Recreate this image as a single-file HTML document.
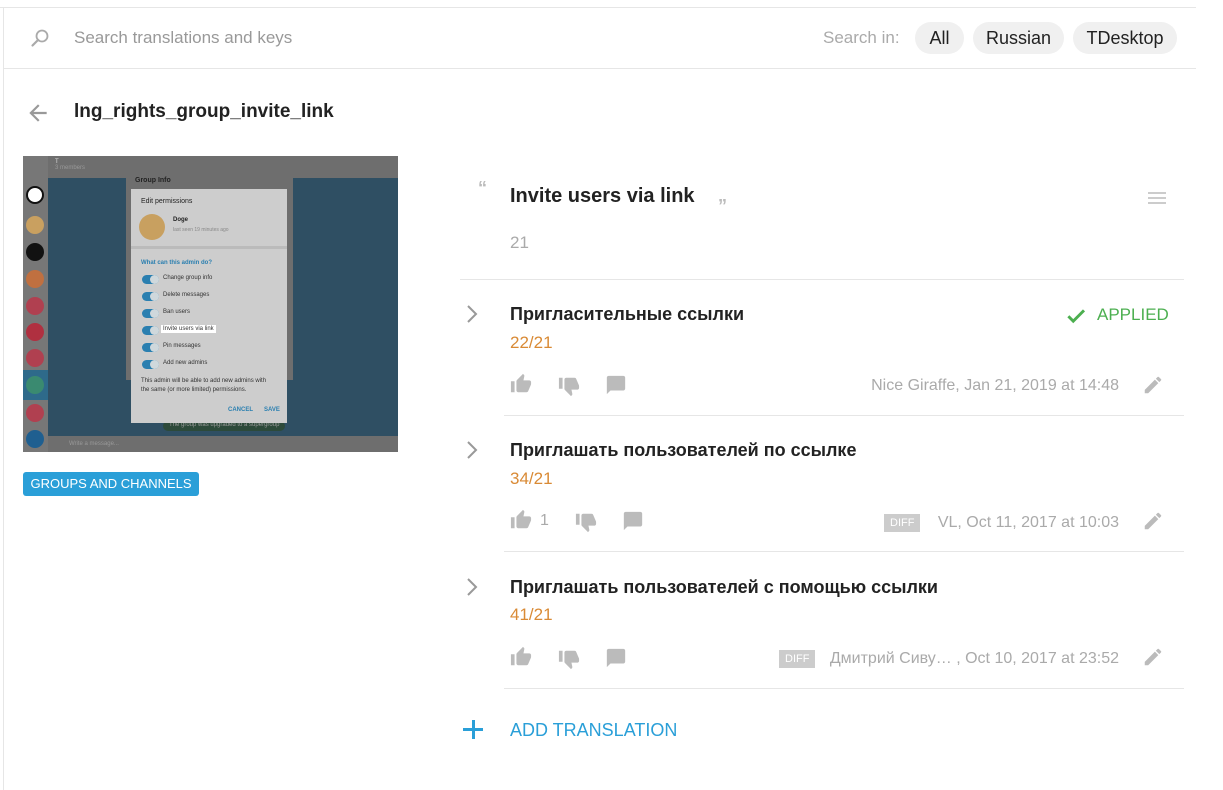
<!DOCTYPE html>
<html><head><meta charset="utf-8"><style>
*{margin:0;padding:0;box-sizing:border-box}
body{width:1223px;height:790px;background:#fff;font-family:"Liberation Sans","Noto Sans CJK SC",sans-serif;position:relative;overflow:hidden;color:#222}
.a{position:absolute;white-space:nowrap}
.chip{position:absolute;top:22px;height:32px;border-radius:16px;background:#f0f0f0;font-size:18px;line-height:32px;text-align:center;color:#222}
.sep{position:absolute;height:1px;background:#e6e6e6}
.t{font-size:18px;color:#222;font-weight:bold}
.n{font-size:17px;color:#d98a35}
.m{font-size:16px;color:#aaa}
.diff{position:absolute;background:#ccc;color:#fff;font-size:11px;height:18px;line-height:18px;padding:0 6px}
svg{position:absolute}
.tg{position:absolute;width:17px;height:9px;border-radius:5px;background:#2a7fb0}
.tg::after{content:"";position:absolute;right:0;top:0;width:9px;height:9px;border-radius:50%;background:#cfd8dc}
.lb{position:absolute;left:163px;font-size:6px;color:#333}
.av{position:absolute;left:25px;width:18px;height:18px;border-radius:50%}
</style></head><body>
<div class="a" style="left:0;top:7px;width:1196px;height:1px;background:#e6e6e6"></div>
<div class="a" style="left:3px;top:7px;width:1px;height:783px;background:#e6e6e6"></div>
<div class="sep" style="left:4px;top:68px;width:1192px"></div>
<svg style="left:30px;top:28px" width="20" height="20" viewBox="0 0 20 20"><circle cx="12" cy="8" r="5.5" fill="none" stroke="#aaa" stroke-width="1.8"/><line x1="8" y1="12" x2="2.5" y2="17.5" stroke="#aaa" stroke-width="2.2" stroke-linecap="round"/></svg>
<div class="a" style="left:74px;top:28px;font-size:17px;color:#999">Search translations and keys</div>
<div class="a" style="left:823px;top:28px;font-size:17px;color:#aaa">Search in:</div>
<div class="chip" style="left:915px;width:49px">All</div>
<div class="chip" style="left:973px;width:91px">Russian</div>
<div class="chip" style="left:1073px;width:104px">TDesktop</div>

<svg style="left:25px;top:100px" width="26" height="26" viewBox="0 0 24 24"><path d="M20 11H7.83l5.59-5.59L12 4l-8 8 8 8 1.41-1.41L7.83 13H20v-2z" fill="#999"/></svg>
<div class="a" style="left:74px;top:101px;font-size:19px;font-weight:bold;color:#222">lng_rights_group_invite_link</div>

<!-- screenshot -->
<div class="a" style="left:23px;top:156px;width:375px;height:296px;background:#2f4f63;overflow:hidden">
 <div class="a" style="left:0;top:0;width:375px;height:22px;background:#6e6e6e"></div>
 <div class="a" style="left:32px;top:3px;font-size:6px;color:#ddd">T<br><span style="color:#999">3 members</span></div>
 <div class="a" style="left:0;top:0;width:25px;height:296px;background:#777"></div>
 <div class="av" style="left:3px;top:30px;background:#fff;border:2px solid #111"></div>
 <div class="av" style="left:3px;top:60px;background:#c9a060"></div>
 <div class="av" style="left:3px;top:87px;background:#111"></div>
 <div class="av" style="left:3px;top:114px;background:#c07040"></div>
 <div class="av" style="left:3px;top:141px;background:#b04050"></div>
 <div class="av" style="left:3px;top:167px;background:#b03040"></div>
 <div class="av" style="left:3px;top:193px;background:#b04050"></div>
 <div class="a" style="left:0;top:214px;width:25px;height:30px;background:#2e6a8a"></div>
 <div class="av" style="left:3px;top:220px;background:#3a8a70"></div>
 <div class="av" style="left:3px;top:248px;background:#b04050"></div>
 <div class="av" style="left:3px;top:274px;background:#1f5f90"></div>
 <div class="a" style="left:25px;top:280px;width:350px;height:16px;background:#6e6e6e"></div>
 <div class="a" style="left:46px;top:285px;font-size:6px;color:#999">Write a message...</div>
 <div class="a" style="left:103px;top:11px;width:167px;height:213px;background:#6e6e6e"></div>
 <div class="a" style="left:112px;top:21px;font-size:7px;color:#222;font-weight:bold">Group Info</div>
 <div class="a" style="left:140px;top:265px;width:122px;height:10px;border-radius:5px;background:#2d4a3a"></div>
 <div class="a" style="left:146px;top:266px;font-size:6px;color:#999">The group was upgraded to a supergroup</div>
 <div class="a" style="left:108px;top:33px;width:156px;height:234px;background:#cdcdcd">
  <div class="a" style="left:10px;top:9px;font-size:7px;color:#222">Edit permissions</div>
  <div class="a" style="left:8px;top:25px;width:26px;height:26px;border-radius:50%;background:#c8a060"></div>
  <div class="a" style="left:42px;top:28px;font-size:6px;font-weight:bold;color:#222">Doge</div>
  <div class="a" style="left:42px;top:38px;font-size:5px;color:#888">last seen 19 minutes ago</div>
  <div class="a" style="left:0;top:57px;width:156px;height:3px;background:#bbb"></div>
  <div class="a" style="left:10px;top:71px;font-size:6px;font-weight:bold;color:#2a7fb0">What can this admin do?</div>
 </div>
 <div class="tg" style="left:119px;top:119px"></div><div class="lb" style="left:140px;top:119px">Change group info</div>
 <div class="tg" style="left:119px;top:136px"></div><div class="lb" style="left:140px;top:136px">Delete messages</div>
 <div class="tg" style="left:119px;top:153px"></div><div class="lb" style="left:140px;top:153px">Ban users</div>
 <div class="tg" style="left:119px;top:170px"></div><div class="lb" style="left:138px;top:169px;background:#fff;padding:1px 2px">Invite users via link</div>
 <div class="tg" style="left:119px;top:187px"></div><div class="lb" style="left:140px;top:187px">Pin messages</div>
 <div class="tg" style="left:119px;top:204px"></div><div class="lb" style="left:140px;top:204px">Add new admins</div>
 <div class="lb" style="left:118px;top:221px;line-height:9px">This admin will be able to add new admins with<br>the same (or more limited) permissions.</div>
 <div class="lb" style="left:205px;top:251px;color:#2a7fb0;font-weight:bold">CANCEL</div>
 <div class="lb" style="left:241px;top:251px;color:#2a7fb0;font-weight:bold">SAVE</div>
</div>
<div class="a" style="left:23px;top:472px;width:176px;height:24px;border-radius:3px;background:#2a9fd8;color:#fff;font-size:13px;line-height:24px;text-align:center">GROUPS AND CHANNELS</div>

<!-- right -->
<div class="a" style="left:478px;top:178px;font-size:18px;color:#bbb;font-weight:bold">“</div>
<div class="a" style="left:510px;top:185px;font-size:20px;color:#222;font-weight:bold">Invite users via link</div>
<div class="a" style="left:718px;top:196px;font-size:18px;color:#bbb;font-weight:bold">”</div>
<div class="a" style="left:1148px;top:192px;width:18px;height:2px;background:#ccc;box-shadow:0 5px 0 #ccc,0 10px 0 #ccc"></div>
<div class="a" style="left:510px;top:233px;font-size:17px;color:#aaa">21</div>
<div class="sep" style="left:460px;top:279px;width:724px"></div>

<!-- item 1 -->
<svg style="left:462px;top:303px" width="20" height="22" viewBox="0 0 20 22"><path d="M6 3l8 8-8 8" fill="none" stroke="#999" stroke-width="2"/></svg>
<div class="a t" style="left:510px;top:304px">Пригласительные ссылки</div>
<div class="a n" style="left:510px;top:333px">22/21</div>
<svg style="left:1065px;top:305px" width="22" height="22" viewBox="0 0 24 24"><path d="M9 16.2L4.8 12l-1.4 1.4L9 19 21 7l-1.4-1.4L9 16.2z" fill="#4caf50" stroke="#4caf50" stroke-width="1.2"/></svg>
<div class="a" style="left:1097px;top:305px;font-size:17px;color:#4caf50">APPLIED</div>
<svg style="left:509px;top:373px" width="24" height="22" viewBox="0 0 24 24"><path d="M1 21h4V9H1v12zm22-11c0-1.1-.9-2-2-2h-6.31l.95-4.57.03-.32c0-.41-.17-.79-.44-1.06L14.17 1 7.59 7.59C7.22 7.95 7 8.45 7 9v10c0 1.1.9 2 2 2h9c.83 0 1.54-.5 1.84-1.22l3.02-7.05c.09-.23.14-.47.14-.73v-2z" fill="#bbb"/></svg>
<svg style="left:557px;top:375px" width="24" height="22" viewBox="0 0 24 24"><path d="M15 3H6c-.83 0-1.54.5-1.84 1.22l-3.02 7.05c-.09.23-.14.47-.14.73v2c0 1.1.9 2 2 2h6.31l-.95 4.57-.03.32c0 .41.17.79.44 1.06L9.83 23l6.59-6.59c.36-.36.58-.86.58-1.41V5c0-1.1-.9-2-2-2zm4 0v12h4V3h-4z" fill="#bbb" transform="translate(24,0) scale(-1,1)"/></svg>
<svg style="left:605px;top:374px" width="22" height="22" viewBox="0 0 24 24"><path d="M20 2H4c-1.1 0-2 .9-2 2v18l4-4h14c1.1 0 2-.9 2-2V4c0-1.1-.9-2-2-2z" fill="#bbb"/></svg>
<div class="a m" style="right:104px;top:377px">Nice Giraffe, Jan 21, 2019 at 14:48</div>
<svg style="left:1142px;top:374px" width="22" height="22" viewBox="0 0 24 24"><path d="M3 17.25V21h3.75L17.810 9.94l-3.75-3.75L3 17.25zM20.71 7.04c.39-.39.39-1.02 0-1.410l-2.34-2.34c-.39-.39-1.020-.39-1.41 0l-1.83 1.83 3.75 3.75 1.83-1.83z" fill="#bbb"/></svg>
<div class="sep" style="left:504px;top:415px;width:680px"></div>

<!-- item 2 -->
<svg style="left:462px;top:439px" width="20" height="22" viewBox="0 0 20 22"><path d="M6 3l8 8-8 8" fill="none" stroke="#999" stroke-width="2"/></svg>
<div class="a t" style="left:510px;top:440px">Приглашать пользователей по ссылке</div>
<div class="a n" style="left:510px;top:469px">34/21</div>
<svg style="left:509px;top:509px" width="24" height="22" viewBox="0 0 24 24"><path d="M1 21h4V9H1v12zm22-11c0-1.1-.9-2-2-2h-6.31l.95-4.57.03-.32c0-.41-.17-.79-.44-1.06L14.17 1 7.59 7.59C7.22 7.95 7 8.45 7 9v10c0 1.1.9 2 2 2h9c.83 0 1.54-.5 1.84-1.22l3.02-7.05c.09-.23.14-.47.14-.73v-2z" fill="#bbb"/></svg>
<div class="a" style="left:540px;top:512px;font-size:16px;color:#aaa">1</div>
<svg style="left:574px;top:511px" width="24" height="22" viewBox="0 0 24 24"><path d="M15 3H6c-.83 0-1.54.5-1.84 1.22l-3.02 7.05c-.09.23-.14.47-.14.73v2c0 1.1.9 2 2 2h6.31l-.95 4.57-.03.32c0 .41.17.79.44 1.06L9.83 23l6.59-6.59c.36-.36.58-.86.58-1.41V5c0-1.1-.9-2-2-2zm4 0v12h4V3h-4z" fill="#bbb" transform="translate(24,0) scale(-1,1)"/></svg>
<svg style="left:622px;top:510px" width="22" height="22" viewBox="0 0 24 24"><path d="M20 2H4c-1.1 0-2 .9-2 2v18l4-4h14c1.1 0 2-.9 2-2V4c0-1.1-.9-2-2-2z" fill="#bbb"/></svg>
<div class="diff" style="left:884px;top:514px">DIFF</div>
<div class="a m" style="right:104px;top:514px">VL, Oct 11, 2017 at 10:03</div>
<svg style="left:1142px;top:510px" width="22" height="22" viewBox="0 0 24 24"><path d="M3 17.25V21h3.75L17.81 9.94l-3.75-3.75L3 17.25zM20.71 7.04c.39-.39.39-1.02 0-1.41l-2.34-2.34c-.39-.39-1.02-.39-1.41 0l-1.83 1.83 3.75 3.75 1.83-1.83z" fill="#bbb"/></svg>
<div class="sep" style="left:504px;top:551px;width:680px"></div>

<!-- item 3 -->
<svg style="left:462px;top:576px" width="20" height="22" viewBox="0 0 20 22"><path d="M6 3l8 8-8 8" fill="none" stroke="#999" stroke-width="2"/></svg>
<div class="a t" style="left:510px;top:577px">Приглашать пользователей с помощью ссылки</div>
<div class="a n" style="left:510px;top:605px">41/21</div>
<svg style="left:509px;top:646px" width="24" height="22" viewBox="0 0 24 24"><path d="M1 21h4V9H1v12zm22-11c0-1.1-.9-2-2-2h-6.31l.95-4.57.03-.32c0-.41-.17-.79-.44-1.06L14.17 1 7.59 7.59C7.22 7.95 7 8.45 7 9v10c0 1.1.9 2 2 2h9c.83 0 1.54-.5 1.84-1.22l3.02-7.05c.09-.23.14-.47.14-.73v-2z" fill="#bbb"/></svg>
<svg style="left:557px;top:648px" width="24" height="22" viewBox="0 0 24 24"><path d="M15 3H6c-.83 0-1.54.5-1.84 1.22l-3.02 7.05c-.09.23-.14.47-.14.73v2c0 1.1.9 2 2 2h6.31l-.95 4.57-.03.32c0 .41.17.79.44 1.06L9.83 23l6.59-6.59c.36-.36.58-.86.58-1.41V5c0-1.1-.9-2-2-2zm4 0v12h4V3h-4z" fill="#bbb" transform="translate(24,0) scale(-1,1)"/></svg>
<svg style="left:605px;top:647px" width="22" height="22" viewBox="0 0 24 24"><path d="M20 2H4c-1.1 0-2 .9-2 2v18l4-4h14c1.1 0 2-.9 2-2V4c0-1.1-.9-2-2-2z" fill="#bbb"/></svg>
<div class="diff" style="left:779px;top:650px">DIFF</div>
<div class="a m" style="right:104px;top:650px">Дмитрий Сиву… , Oct 10, 2017 at 23:52</div>
<svg style="left:1142px;top:646px" width="22" height="22" viewBox="0 0 24 24"><path d="M3 17.25V21h3.75L17.81 9.94l-3.75-3.75L3 17.25zM20.71 7.04c.39-.39.39-1.02 0-1.41l-2.34-2.34c-.39-.39-1.02-.39-1.41 0l-1.83 1.83 3.75 3.75 1.83-1.83z" fill="#bbb"/></svg>
<div class="sep" style="left:504px;top:688px;width:680px"></div>

<div class="a" style="left:463px;top:728px;width:20px;height:3px;background:#2a9fd8"></div>
<div class="a" style="left:471.5px;top:720px;width:3px;height:19px;background:#2a9fd8"></div>
<div class="a" style="left:510px;top:720px;font-size:18px;color:#2a9fd8">ADD TRANSLATION</div>
</body></html>
